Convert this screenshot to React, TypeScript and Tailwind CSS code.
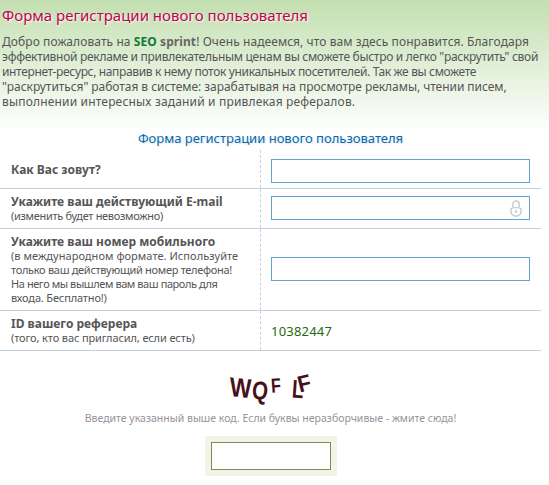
import React from 'react';

const fieldClass = 'block h-[24px] w-[259px] border border-[#64a5cf] bg-white';

export default function App() {
  return (
    <div className="h-[485px] w-[549px] overflow-hidden bg-white font-['Noto_Sans',sans-serif] text-[12px] text-[#555]">
      <div className="h-[150px] bg-gradient-to-b from-[#c3dfb0] to-white to-[88%] px-[2px] pt-[4px]">
        <h1 className="text-[15px] leading-[22px] font-normal text-[#c4004f] [text-shadow:1px_1px_2px_#fff]">
          Форма регистрации нового пользователя
        </h1>
        <div className="mt-[8px] leading-[15px] whitespace-nowrap text-[#555]">
          <div className="tracking-[0.08px]">
            Добро пожаловать на <b className="text-[#0d7a3a]">SEO</b> <b className="text-[#666]">sprint</b>! Очень надеемся, что вам здесь понравится. Благодаря
          </div>
          <div className="tracking-[-0.29px]">эффективной рекламе и привлекательным ценам вы сможете быстро и легко "раскрутить" свой</div>
          <div className="tracking-[-0.35px]">интернет-ресурс, направив к нему поток уникальных посетителей. Так же вы сможете</div>
          <div className="tracking-[-0.05px]">"раскрутиться" работая в системе: зарабатывая на просмотре рекламы, чтении писем,</div>
          <div className="tracking-[0.17px]">выполнении интересных заданий и привлекая рефералов.</div>
        </div>
        <h2 className="mt-[20px] w-[537px] text-center text-[13px] leading-[18px] font-normal text-[#0a69a8] [text-shadow:1px_1px_2px_#cfe3f2]">
          Форма регистрации нового пользователя
        </h2>
      </div>

      <div className="w-[541px]">
        <div className="flex h-[39px] border-b border-[#c3d1de]">
          <div className="w-[261px] border-r border-dashed border-[#c3d1de] pt-[13px] pl-[11px] leading-[14px] font-bold text-[#555]">
            Как Вас зовут?
          </div>
          <div className="flex-1 pt-[9px] pl-[10px]">
            <div className={fieldClass} />
          </div>
        </div>

        <div className="flex h-[40px] border-b border-[#c3d1de]">
          <div className="w-[261px] border-r border-dashed border-[#c3d1de] pt-[6px] pl-[11px] leading-[14px]">
            <div className="font-bold">Укажите ваш действующий E-mail</div>
            <div className="text-[11px] tracking-[-0.3px]">(изменить будет невозможно)</div>
          </div>
          <div className="flex-1 pt-[7px] pl-[10px]">
            <div className={`${fieldClass} relative`}>
              <svg className="absolute top-[3px] right-[7px]" width="12" height="17" viewBox="0 0 12 17" fill="none" stroke="#c4ccd6" strokeWidth="1.4">
                <path d="M2.8 7V4.2a3.2 3.2 0 0 1 6.4 0V7" />
                <path d="M1 8.5c1-1.2 9-1.2 10 0v3.5c0 2.5-3 3.8-5 4.3-2-.5-5-1.8-5-4.3z" />
                <path d="M6 10v3" strokeWidth="1.8" />
              </svg>
            </div>
          </div>
        </div>

        <div className="flex h-[82px] border-b border-[#c3d1de]">
          <div className="w-[261px] border-r border-dashed border-[#c3d1de] pt-[6px] pl-[11px] text-[11px] leading-[14px] whitespace-nowrap">
            <div className="text-[12px] font-bold">Укажите ваш номер мобильного</div>
            <div className="tracking-[0.05px]">(в международном формате. Используйте</div>
            <div className="tracking-[-0.3px]">только ваш действующий номер телефона!</div>
            <div className="tracking-[-0.42px]">На него мы вышлем вам ваш пароль для</div>
            <div className="tracking-[-0.15px]">входа. Бесплатно!)</div>
          </div>
          <div className="flex-1 pt-[28px] pl-[10px]">
            <div className={fieldClass} />
          </div>
        </div>

        <div className="flex h-[40px] border-b border-[#c3d1de]">
          <div className="w-[261px] border-r border-dashed border-[#c3d1de] pt-[6px] pl-[11px] leading-[14px]">
            <div className="font-bold">ID вашего реферера</div>
            <div className="text-[11px] tracking-[-0.12px]">(того, кто вас пригласил, если есть)</div>
          </div>
          <div className="flex-1 pt-[13px] pl-[10px] text-[13px] leading-[14px] tracking-[0.2px] text-[#1f6a10]">10382447</div>
        </div>

        <div className="flex flex-col items-center">
          <div className="mt-[22px] flex h-[32px] w-[82px] items-center font-['Liberation_Sans',sans-serif] text-[27px] leading-none font-bold whitespace-nowrap text-[#47101a]">
            <span className="inline-block w-[22px] origin-left translate-y-[-2px] scale-x-[0.85] rotate-[6deg] skew-x-[6deg]">W</span>
            <span className="inline-block w-[19px] origin-left translate-y-[1px] scale-x-[0.76] scale-y-[0.95] rotate-[6deg]">Q</span>
            <span className="inline-block w-[21px] origin-left translate-y-[-3px] scale-x-[0.6] scale-y-[0.75] rotate-[-4deg]">F</span>
            <span className="inline-block w-[6px] origin-left scale-x-[0.7] scale-y-[0.95] rotate-[4deg]">L</span>
            <span className="inline-block w-[14px] origin-left translate-y-[-4px] scale-x-[0.8] scale-y-[0.85] rotate-[-14deg]">F</span>
          </div>
          <div className="mt-[6px] text-[10.5px] leading-[14px] text-[#9a909a]">
            Введите указанный выше код. Если буквы неразборчивые - жмите сюда!
          </div>
          <div className="mt-[11px] bg-[#f3f4e8] p-[6px]">
            <div className="h-[28px] w-[120px] border border-[#7f8a50] bg-white" />
          </div>
        </div>
      </div>
    </div>
  );
}
